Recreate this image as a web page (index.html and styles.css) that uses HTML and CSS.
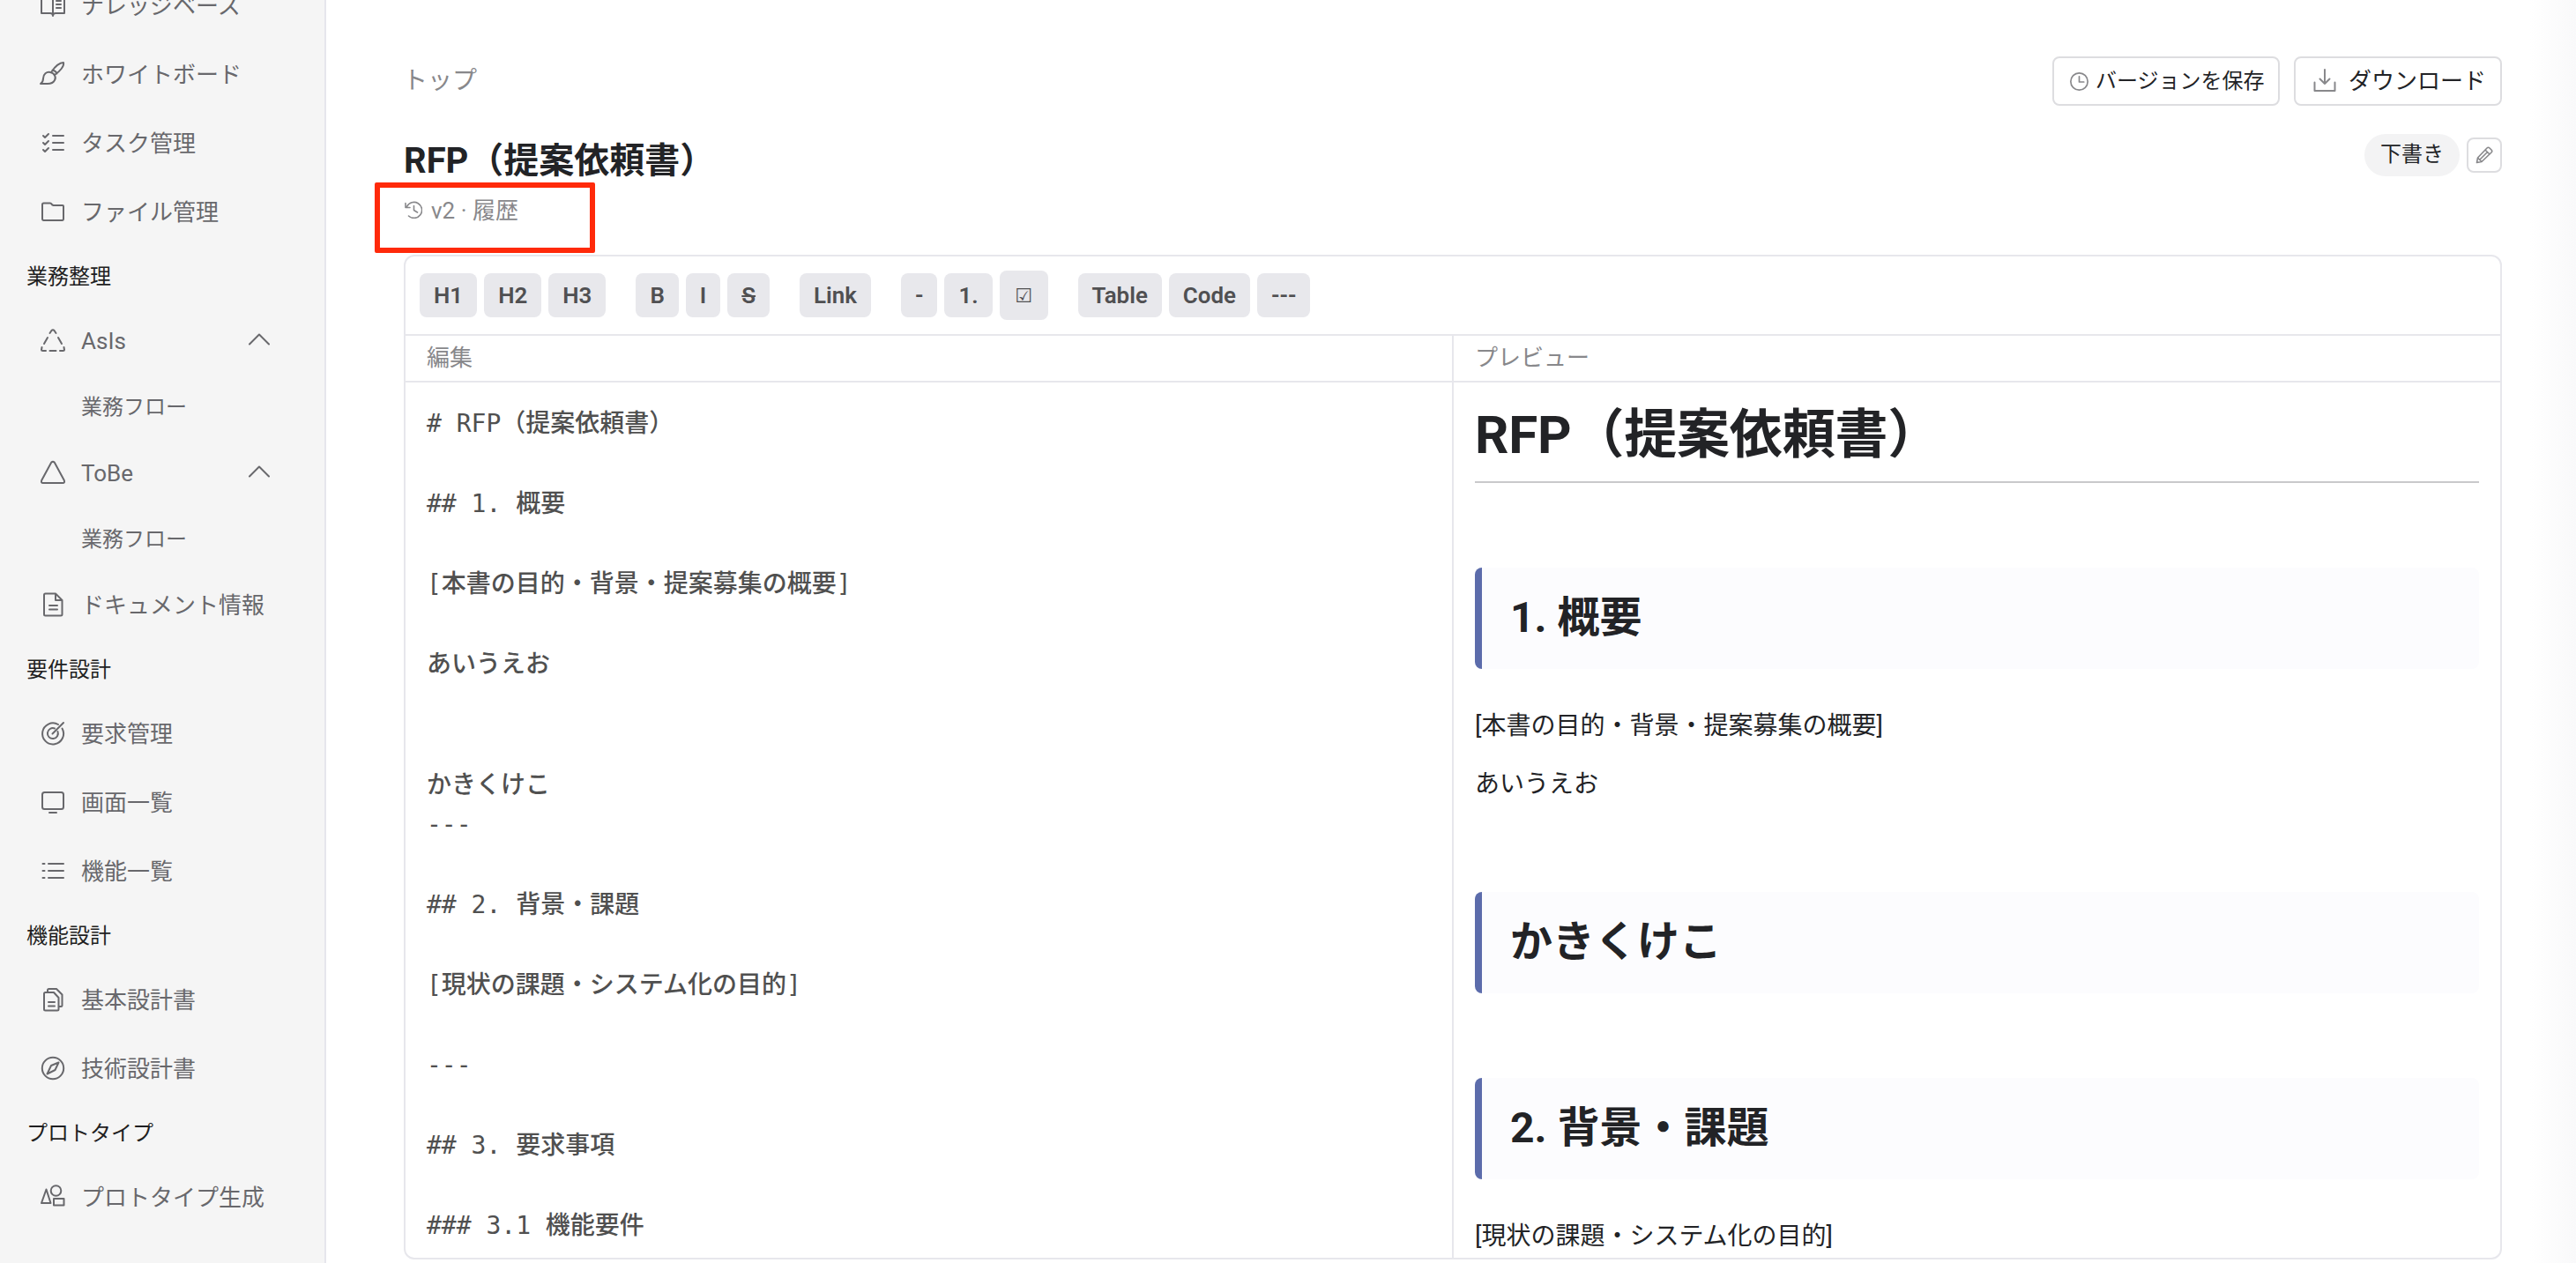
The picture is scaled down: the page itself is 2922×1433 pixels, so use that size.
FILE: index.html
```html
<!doctype html>
<html lang="ja">
    <head>
        <meta charset="UTF-8" />
        <meta name="viewport" content="width=device-width, initial-scale=1.0" />
        <title>RFP（提案依頼書）</title>
        <link rel="stylesheet" href="styles.css">
    </head>
    <body>
        <nav class="sidebar">
            <a class="nav-item">
                <svg class="icon" viewBox="0 0 32 32"><path d="M16 8C14 5 10 5 3 5v20h10q3 0 3 3q0-3 3-3h10V5c-7 0-11 0-13 3zM16 8v20M20 11h5M20 15h5M20 19h5" /></svg>
                ナレッジベース
            </a>
            <a class="nav-item">
                <svg class="icon" viewBox="0 0 32 32"><path d="M2 27q3-2 3-6c0-5 4-8 8-7c5 1 7 6 5 9c-2 4-5 4-8 4zM14 14C18 8 23 3 28 3c1 4-4 10-10 14M15.500 11.500q4 1 5 4" /></svg>
                ホワイトボード
            </a>
            <a class="nav-item">
                <svg class="icon" viewBox="0 0 32 32"><path d="M5 8l2 2 4-4M5 16l2 2 4-4M5 24l2 2 4-4M16 8h12M16 16h12M16 24h12" /></svg>
                タスク管理
            </a>
            <a class="nav-item">
                <svg class="icon" viewBox="0 0 32 32"><path d="M4 24V8q0-1.500 1.500-1.500h7.500q1 0 1.500 1t2 1.500H27q1 0 1 1v14q0 2-1.500 2h-21Q4 26 4 24z" /></svg>
                ファイル管理
            </a>
            <div class="nav-label">業務整理</div>
            <a class="nav-item nav-parent">
                <svg class="icon" viewBox="0 0 32 32"><path d="M12.500 7l2-3q1.500-1.500 3 0l2 3M10 12l-4 7M22 12l4 7M3.500 23l-.5 3q0 1 1.500 1H8M28.500 23l.5 3q0 1-1.500 1H24M12.500 27h7" /></svg>
                AsIs
                <svg class="chevron" viewBox="0 0 24 14"><path d="M1 12.500L12 1.500l11 11" /></svg>
            </a>
            <a class="nav-sub">業務フロー</a>
            <a class="nav-item nav-parent">
                <svg class="icon" viewBox="0 0 32 32"><path d="M14.300 3.600L3.200 24q-1 3 1.600 3h22.400q2.600 0 1.600-3L17.700 3.600q-1.700-1.500-3.400 0z" /></svg>
                ToBe
                <svg class="chevron" viewBox="0 0 24 14"><path d="M1 12.500L12 1.500l11 11" /></svg>
            </a>
            <a class="nav-sub">業務フロー</a>
            <a class="nav-item">
                <svg class="icon" viewBox="0 0 32 32"><path d="M6 5q0-1.500 1.500-1.500H19l7.500 7.500v16q0 1.500-1.500 1.500H7.500Q6 28.500 6 27zM19 3.500V11h7.500M12 17h9M12 21.500h9" /></svg>
                ドキュメント情報
            </a>
            <div class="nav-label">要件設計</div>
            <a class="nav-item">
                <svg class="icon" viewBox="0 0 32 32"><path d="M22 6A12 12 0 1 0 26.500 10.500M18 10.500A6 6 0 1 0 21.500 14M15.500 16.500L28 4" /></svg>
                要求管理
            </a>
            <a class="nav-item">
                <svg class="icon" viewBox="0 0 32 32"><rect x="4" y="5" width="24" height="19" rx="2.500" /><path d="M12 28h8" /></svg>
                画面一覧
            </a>
            <a class="nav-item">
                <svg class="icon" viewBox="0 0 32 32"><path d="M4.500 8h2M4.500 16h2M4.500 24h2M11 8h17M11 16h17M11 24h17" /></svg>
                機能一覧
            </a>
            <div class="nav-label">機能設計</div>
            <a class="nav-item">
                <svg class="icon" viewBox="0 0 32 32"><path d="M6 9.500Q6 8 7.500 8H17l5.500 6v13q0 1.500-1.500 1.500H7.500Q6 28.500 6 27zM10 8V5.500Q10 4 11.500 4H20l6.500 6.500v12q0 1.500-1.500 1.500h-2.500M11 19h7M11 23.500h7" /></svg>
                基本設計書
            </a>
            <a class="nav-item">
                <svg class="icon" viewBox="0 0 32 32"><circle cx="16" cy="16" r="12.200" /><path d="M22.500 9.500L14 13l-4.500 9.500L18.500 18z" /></svg>
                技術設計書
            </a>
            <div class="nav-label">プロトタイプ</div>
            <a class="nav-item">
                <svg class="icon" viewBox="0 0 32 32"><path d="M8.500 7.500L3 23h10.500z" /><circle cx="19.500" cy="9" r="5.800" /><rect x="17" y="18" width="11.500" height="7.500" /></svg>
                プロトタイプ生成
            </a>
        </nav>

        <main class="main">
            <header class="topbar">
                <a class="breadcrumb">トップ</a>
                <div class="actions">
                    <button class="btn btn-save">
                        <svg viewBox="0 0 20 20"><circle cx="10" cy="10" r="9.200" /><path d="M10 4.500v6h5" /></svg>
                        バージョンを保存
                    </button>
                    <button class="btn btn-download">
                        <svg viewBox="0 0 26 26"><path d="M13 1v16M7.500 11.500L13 17l5.500-5.500M1.500 15.500V25h23v-9.500" /></svg>
                        ダウンロード
                    </button>
                </div>
            </header>

            <div class="doc-head">
                <div>
                    <h1 class="doc-title">RFP（提案依頼書）</h1>
                    <a class="version">
                        <svg viewBox="0 0 20 20"><path d="M2.500 6.500A9 9 0 1 1 4.500 17M1 2.500v5h5M10.500 5.500v5l4 2.500" /></svg>
                        v2 · 履歴
                    </a>
                </div>
                <div class="status">
                    <span class="badge">下書き</span>
                    <button class="btn-edit">
                        <svg viewBox="0 0 20 20"><path d="M1.500 18.500l1-5.500L13 2q1.500-1.500 3 0l2 2q1.500 1.500 0 3L7 17.500zM11 4l5 5M2.500 13l4.500 4.500M13.500 6.500L5 15" /></svg>
                    </button>
                </div>
                <div class="highlight"></div>
            </div>

            <section class="editor">
                <div class="toolbar">
                    <div class="tool-group">
                        <button>H1</button>
                        <button>H2</button>
                        <button>H3</button>
                    </div>
                    <div class="tool-group">
                        <button>B</button>
                        <button>I</button>
                        <button><s>S</s></button>
                    </div>
                    <div class="tool-group">
                        <button>Link</button>
                    </div>
                    <div class="tool-group">
                        <button>-</button>
                        <button>1.</button>
                        <button class="tool-check">☑</button>
                    </div>
                    <div class="tool-group">
                        <button>Table</button>
                        <button>Code</button>
                        <button>---</button>
                    </div>
                </div>
                <div class="panes">
                    <div class="pane">
                        <div class="pane-label">編集</div>
                        <pre class="source"># RFP（提案依頼書）

## 1. 概要

[本書の目的・背景・提案募集の概要]

あいうえお


かきくけこ
---

## 2. 背景・課題

[現状の課題・システム化の目的]

---

## 3. 要求事項

### 3.1 機能要件</pre>
                    </div>
                    <div class="pane">
                        <div class="pane-label">プレビュー</div>
                        <article class="preview">
                            <h1>RFP（提案依頼書）</h1>
                            <h2>1. 概要</h2>
                            <p>[本書の目的・背景・提案募集の概要]</p>
                            <p>あいうえお</p>
                            <h2>かきくけこ</h2>
                            <h2>2. 背景・課題</h2>
                            <p>[現状の課題・システム化の目的]</p>
                        </article>
                    </div>
                </div>
            </section>
        </main>
    </body>
</html>
```

FILE: styles.css
```css
* {
    box-sizing: border-box;
}

body {
    margin: 0;
    height: 1433px;
    display: flex;
    overflow: hidden;
    background: #fff;
    color: #222326;
    font-family: Roboto, "Noto Sans CJK JP", sans-serif;
    font-size: 28px;
}

button {
    font-family: inherit;
    color: inherit;
    border: none;
    white-space: nowrap;
}

svg {
    flex: none;
    fill: none;
    stroke: currentColor;
    stroke-width: 2;
    stroke-linecap: round;
    stroke-linejoin: round;
}

/* Sidebar, scrolled down a little */
.sidebar {
    flex: none;
    width: 370px;
    height: 1466px;
    margin-top: -33px;
    background: #f5f5f5;
    border-right: 2px solid #e6e6ec;
    color: #68686c;
}

.nav-item {
    display: flex;
    align-items: center;
    gap: 16px;
    height: 78px;
    padding: 0 62px 4px 44px;
    font-size: 26px;
    white-space: nowrap;
}

.icon {
    width: 32px;
    height: 32px;
    margin-top: 4px;
}

.nav-parent {
    padding-top: 2px;
    padding-bottom: 0;
}

.nav-parent .icon {
    margin-top: 0;
}

.chevron {
    width: 24px;
    height: 14px;
    margin-left: auto;
    margin-top: -4px;
}

.nav-sub {
    display: flex;
    align-items: center;
    height: 72px;
    padding-left: 92px;
    padding-bottom: 4px;
    font-size: 24px;
}

.nav-label {
    height: 68px;
    padding-left: 30px;
    line-height: 70px;
    font-size: 24px;
    color: #1f1f22;
}

/* Main */
.main {
    flex: 1;
    padding: 64px 84px 0 88px;
    background: linear-gradient(to left, #f9f9fa, #fff 52px);
}

.topbar {
    display: flex;
    align-items: center;
    justify-content: space-between;
    height: 56px;
}

.breadcrumb {
    padding-bottom: 7px;
    margin-left: -1px;
    color: #88888b;
}

.actions {
    display: flex;
    gap: 16px;
}

.btn {
    display: flex;
    align-items: center;
    height: 56px;
    background: #fff;
    border: 2px solid #dddde0;
    border-radius: 8px;
}

.btn svg {
    color: #88888b;
}

.btn-save {
    gap: 8px;
    width: 258px;
    padding: 0 0 5px 18px;
    font-size: 24px;
}

.btn-save svg {
    width: 21px;
    height: 21px;
    margin-top: 5px;
    stroke-width: 1.6;
}

.btn-download {
    gap: 14px;
    width: 236px;
    padding: 0 0 5px 20px;
    font-size: 26px;
}

.btn-download svg {
    width: 26px;
    height: 26px;
    margin-top: 3px;
}

.doc-head {
    position: relative;
    display: flex;
    justify-content: space-between;
    height: 169px;
    padding-top: 32px;
}

.doc-title {
    margin: 0 0 7px;
    padding-top: 2px;
    font-size: 40px;
    line-height: 58px;
    white-space: nowrap;
}

.version {
    display: flex;
    align-items: center;
    gap: 10px;
    height: 34px;
    padding-left: 1px;
    font-size: 26px;
    color: #88888b;
}

.version svg {
    width: 20px;
    height: 20px;
    margin-top: 3px;
    stroke-width: 1.6;
}

.status {
    display: flex;
    align-items: center;
    gap: 8px;
    height: 48px;
}

.badge {
    height: 48px;
    padding: 0 18px;
    line-height: 46px;
    font-size: 24px;
    background: #f3f3f4;
    border-radius: 24px;
}

.btn-edit {
    display: flex;
    align-items: center;
    justify-content: center;
    width: 40px;
    height: 40px;
    padding: 0;
    color: #88888b;
    background: #fff;
    border: 2px solid #dddde0;
    border-radius: 8px;
}

.btn-edit svg {
    width: 20px;
    height: 20px;
    stroke-width: 1.6;
}

/* Red frame over the version link */
.highlight {
    position: absolute;
    top: 87px;
    left: -33px;
    width: 250px;
    height: 80px;
    border: 6px solid #ff2a0a;
    border-radius: 2px;
}

/* Editor */
.editor {
    display: flex;
    flex-direction: column;
    height: 1140px;
    border: 2px solid #e7e7ec;
    border-radius: 12px;
    overflow: hidden;
}

.toolbar {
    flex: none;
    display: flex;
    align-items: center;
    gap: 34px;
    height: 90px;
    padding: 0 16px;
    border-bottom: 2px solid #e7e7ec;
}

.tool-group {
    display: flex;
    align-items: center;
    gap: 8px;
}

.tool-group button {
    height: 50px;
    padding: 0 16px;
    font-size: 25.9px;
    font-weight: 600;
    color: #505052;
    background: #e8e8ec;
    border-radius: 8px;
}

.tool-group .tool-check {
    height: 56px;
    width: 55px;
    font-family: "DejaVu Sans", sans-serif;
    font-size: 22px;
    font-weight: 400;
}

.panes {
    flex: 1;
    display: grid;
    grid-template-columns: 1187px 1fr;
    min-height: 0;
}

.pane + .pane {
    border-left: 2px solid #e7e7ec;
}

.pane-label {
    height: 53px;
    padding: 0 24px;
    line-height: 50px;
    font-size: 26px;
    color: #88888b;
    border-bottom: 2px solid #e7e7ec;
}

.source {
    margin: 0;
    padding: 24px 24px 0;
    font: 500 28px/45.5px "DejaVu Sans Mono", "Noto Sans CJK JP", monospace;
    color: #505050;
}

.preview {
    padding: 0 24px;
}

.preview h1 {
    margin: 0 0 96px;
    height: 114px;
    padding-top: 16px;
    font-size: 60px;
    line-height: 88px;
    letter-spacing: -0.2px;
    border-bottom: 2px solid #c9c9cb;
}

.preview h2 {
    margin: 0 0 42px;
    height: 115px;
    padding-left: 32px;
    line-height: 114px;
    font-size: 48px;
    background: #fcfcfe;
    border-left: 8px solid #5c6cab;
    border-radius: 8px;
}

.preview p {
    margin: 0 0 20px;
    line-height: 46px;
}

.preview p + h2 {
    margin-top: 99px;
}

.preview h2 + h2 {
    margin-top: 96px;
}
```
